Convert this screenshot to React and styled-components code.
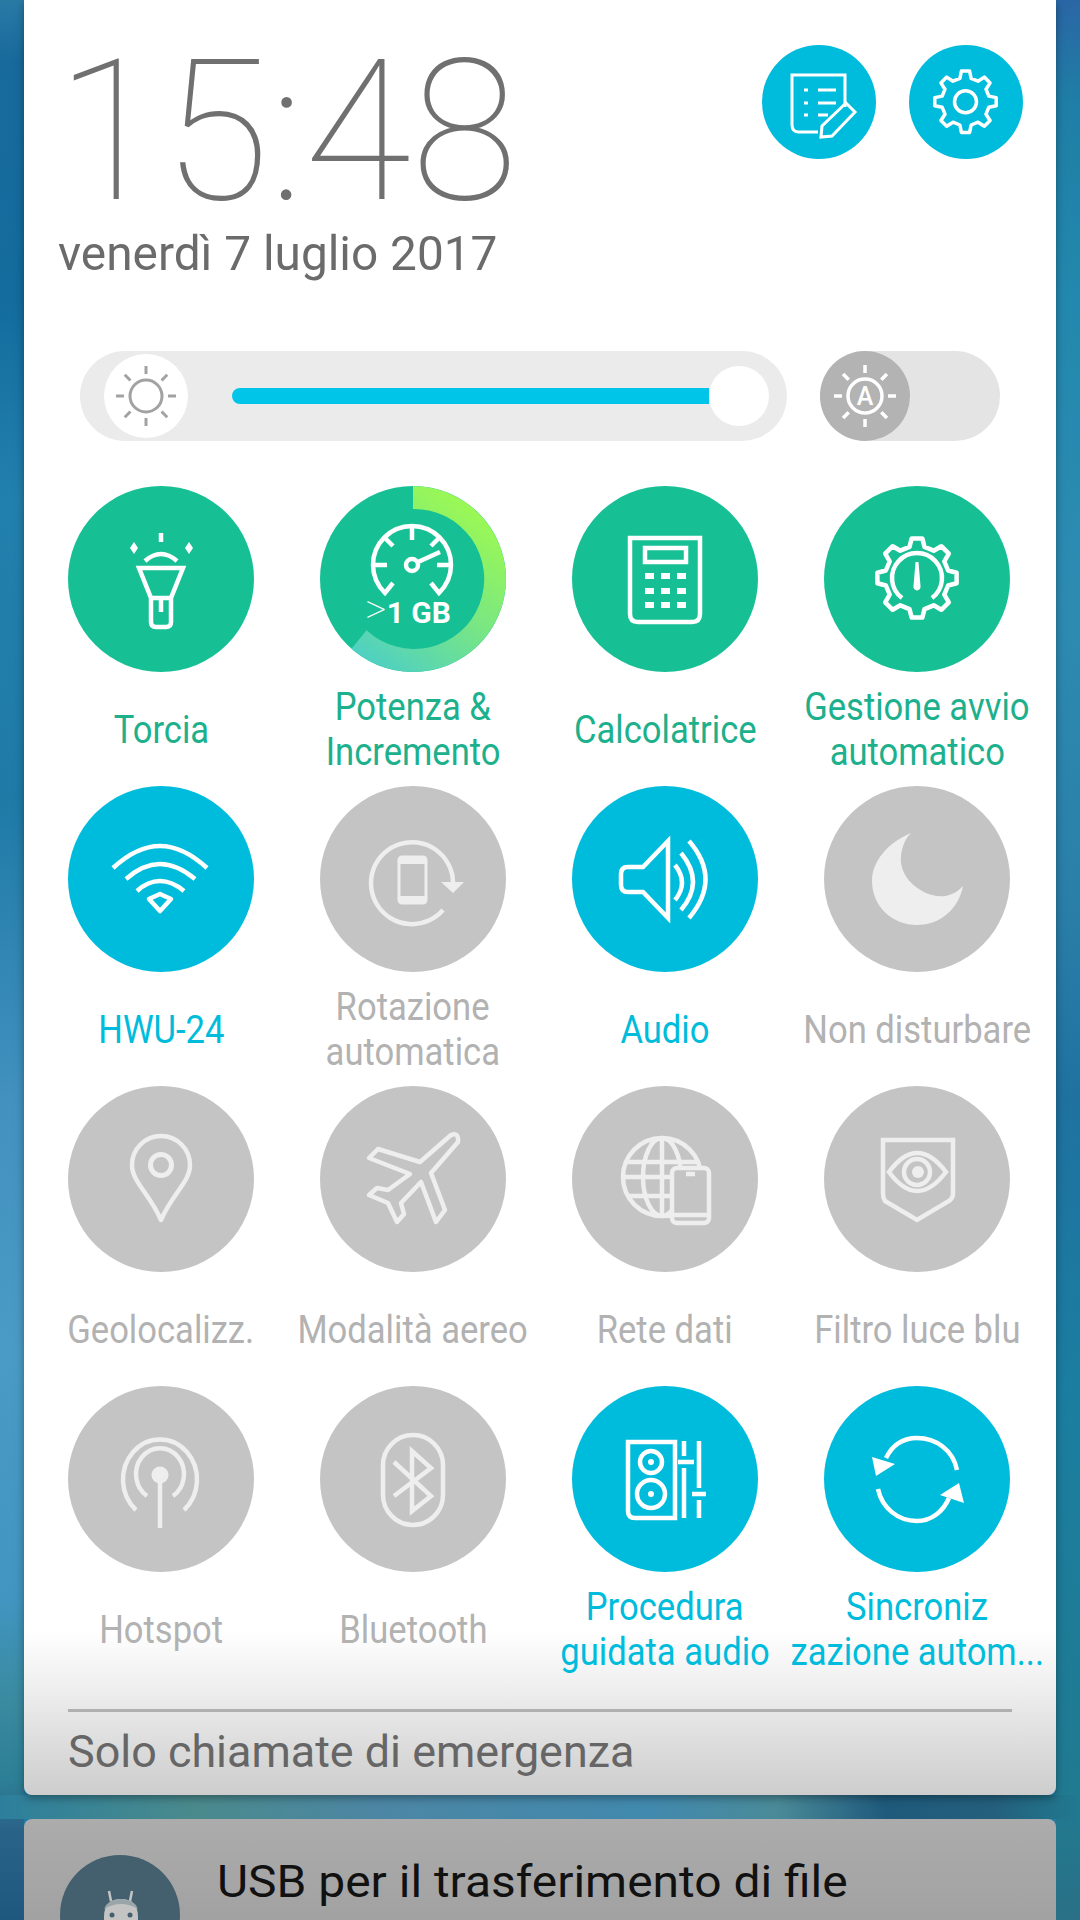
import React from 'react';
import styled, { createGlobalStyle } from 'styled-components';

const GlobalStyle = createGlobalStyle`
  html, body {
    margin: 0;
    padding: 0;
    background: #1f7aa6;
  }
  body {
    font-family: Roboto, "Liberation Sans", sans-serif;
  }
`;

const TONES = {
  green: { bg: '#16c094', text: '#1cb08d', icon: '#ffffff' },
  blue: { bg: '#00bcdc', text: '#00bcdc', icon: '#ffffff' },
  off: { bg: '#c4c4c4', text: '#b2b2b2', icon: '#eeeeee' },
};

const Page = styled.div`
  width: 1080px;
  height: 1920px;
  overflow: hidden;
  box-sizing: border-box;
  padding: 0 24px;
  display: flex;
  flex-direction: column;
  gap: 24px;
  background:
    linear-gradient(to right, #2c7f9c 0, #4a8a8c 18%, #4c86a4 35%, #4189ae 60%, #4a8a98 72%, #1f5a7c 82%, #245f7c 92%, #207a90 100%) 0 1795px / 100% 24px no-repeat,
    linear-gradient(#2a66a5 0, #1f7ea5 100px, #2388ad 300px, #2d8bb2 600px, #2a7fa8 900px, #1f72a0 1100px, #1b7ea0 1400px, #207a90 1800px, #2a7086 1920px) right / 24px 100% no-repeat,
    linear-gradient(#2a7aa6 0, #186a9c 60px, #136c9d 300px, #2280ae 500px, #1f7aa6 800px, #4291bf 1100px, #4a9bc6 1350px, #4195c0 1600px, #3a8aa0 1700px, #2d7f96 1780px, #2a6388 1830px, #1f587f 1920px) left / 24px 100% no-repeat;
`;

const Panel = styled.section`
  flex: none;
  height: 1795px;
  display: flex;
  flex-direction: column;
  border-radius: 0 0 8px 8px;
  box-shadow: 0 3px 8px rgba(0, 0, 0, 0.35);
  background: linear-gradient(#fff 0, #fff 1630px, #f1f1f1 1680px, #dedede 1740px, #cdcdcd 1795px);
`;

const Header = styled.header`
  height: 351px;
  flex: none;
  display: flex;
  justify-content: space-between;
  box-sizing: border-box;
`;

const Clock = styled.div`
  padding-left: 34px;
`;

const Time = styled.div`
  font-size: 197px;
  font-weight: 100;
  line-height: 180px;
  margin-top: 42px;
  margin-left: -2px;
  color: #707070;
  white-space: nowrap;
  transform: scaleX(0.99);
  transform-origin: left center;
`;

const DateText = styled.div`
  font-size: 49px;
  line-height: 60px;
  margin-top: 2px;
  color: #6b6b6b;
  white-space: nowrap;
  transform: scaleX(0.975);
  transform-origin: left center;
`;

const Shortcuts = styled.div`
  display: flex;
  gap: 33px;
  padding: 45px 33px 0 0;
`;

const RoundButton = styled.div`
  width: 114px;
  height: 114px;
  border-radius: 50%;
  background: #00bcdc;
  color: #fff;
`;

const SliderRow = styled.div`
  flex: none;
  display: flex;
  gap: 33px;
  margin-left: 56px;
`;

const Track = styled.div`
  width: 707px;
  height: 90px;
  box-sizing: border-box;
  border-radius: 45px;
  background: #ebebeb;
  display: flex;
  align-items: center;
  padding: 0 18px 0 24px;
`;

const SunBadge = styled.div`
  width: 84px;
  height: 84px;
  flex: none;
  border-radius: 50%;
  background: #fff;
  color: #a2a2a2;
`;

const Fill = styled.div`
  flex: 1;
  height: 16px;
  margin-left: 44px;
  border-radius: 8px 0 0 8px;
  background: #00c4e8;
`;

const Thumb = styled.div`
  width: 60px;
  height: 60px;
  flex: none;
  border-radius: 50%;
  background: #fff;
`;

const AutoToggle = styled.div`
  width: 180px;
  height: 90px;
  border-radius: 45px;
  background: #e4e4e4;
`;

const AutoKnob = styled.div`
  width: 90px;
  height: 90px;
  border-radius: 50%;
  background: #b3b3b3;
  color: #fff;
`;

const Grid = styled.div`
  flex: none;
  display: grid;
  grid-template-columns: repeat(4, 252px);
  grid-auto-rows: 300px;
  margin-top: 45px;
  padding-left: 11px;
`;

const Tile = styled.div`
  display: flex;
  flex-direction: column;
  align-items: center;
`;

const Disc = styled.div`
  width: 186px;
  height: 186px;
  flex: none;
  border-radius: 50%;
  background: ${(p) => TONES[p.$tone].bg};
  color: ${(p) => TONES[p.$tone].icon};
`;

const Label = styled.div`
  height: 90px;
  margin-top: 13px;
  display: flex;
  flex-direction: column;
  align-items: center;
  justify-content: center;
  font-size: 38px;
  line-height: 45px;
  color: ${(p) => TONES[p.$tone].text};
`;

const LabelLine = styled.span`
  display: block;
  white-space: nowrap;
  transform: scaleX(0.91);
`;

const Footer = styled.div`
  flex: none;
  margin: 23px 44px 0;
  border-top: 3px solid #b0b0b0;
`;

const Carrier = styled.div`
  font-size: 44px;
  line-height: 50px;
  margin-top: 15px;
  color: #666;
  white-space: nowrap;
  transform: scaleX(1.02);
  transform-origin: left center;
`;

const NoticeCard = styled.section`
  flex: none;
  height: 120px;
  border-radius: 8px 8px 0 0;
  background: linear-gradient(#acacac, #9c9c9c);
  display: flex;
  gap: 37px;
  padding: 36px 0 0 36px;
`;

const Avatar = styled.div`
  width: 120px;
  height: 120px;
  flex: none;
  border-radius: 50%;
  background: #44606e;
`;

const NoticeTitle = styled.div`
  font-size: 45px;
  line-height: 50px;
  margin-top: 2px;
  color: #111;
  white-space: nowrap;
  transform: scaleX(1.065);
  transform-origin: left center;
`;

const Icon = styled.svg`
  display: block;
  width: 100%;
  height: 100%;
  fill: none;
  stroke: currentColor;
  stroke-width: ${(p) => p.$weight || 4.5};
`;

const Solid = styled.g`
  fill: currentColor;
  stroke: none;
`;

const IconText = styled.text`
  font-family: Roboto, "Liberation Sans", sans-serif;
  fill: currentColor;
  stroke: none;
`;

// gear outline used by the settings button and the autostart tile
const gearPath = (cx, cy, rOut, rIn, teeth) => {
  const step = (Math.PI * 2) / teeth;
  const pts = [];
  for (let i = 0; i < teeth; i++) {
    const a = i * step - Math.PI / 2;
    const at = (r, d) => [cx + r * Math.cos(a + d * step), cy + r * Math.sin(a + d * step)];
    pts.push(at(rIn, -0.3), at(rOut, -0.17), at(rOut, 0.17), at(rIn, 0.3));
  }
  return 'M' + pts.map((p) => p[0].toFixed(1) + ' ' + p[1].toFixed(1)).join('L') + 'Z';
};

const rays = (cx, cy, r1, r2) =>
  [0, 1, 2, 3, 4, 5, 6, 7].map((i) => {
    const a = (i * Math.PI) / 4;
    return (
      <line
        key={i}
        x1={cx + r1 * Math.cos(a)}
        y1={cy + r1 * Math.sin(a)}
        x2={cx + r2 * Math.cos(a)}
        y2={cy + r2 * Math.sin(a)}
      />
    );
  });

const NotesIcon = () => (
  <Icon viewBox="0 0 114 114" $weight={3}>
    <path d="M83 62V30H30V80q0 7 7 7H56" />
    <path d="M42 45h4M56 45h18M42 58h4M56 58h18M42 70h4M56 70h10" />
    <path d="M59 92l1-11 24-23 9 9-23 24z" />
  </Icon>
);

const SettingsIcon = () => (
  <Icon viewBox="0 0 114 114" $weight={3.5}>
    <path d={gearPath(56.5, 56.7, 31, 24, 8)} strokeLinejoin="round" />
    <circle cx="56.5" cy="56.7" r="11" />
  </Icon>
);

const SunIcon = () => (
  <Icon viewBox="0 0 84 84" $weight={3}>
    <circle cx="42" cy="42" r="16" />
    {rays(42, 42, 22, 30)}
  </Icon>
);

const AutoSunIcon = () => (
  <Icon viewBox="0 0 90 90" $weight={3.5}>
    <circle cx="45" cy="45" r="17" />
    {rays(45, 45, 23, 31)}
    <IconText x="45" y="54" fontSize="25" fontWeight="500" textAnchor="middle">A</IconText>
  </Icon>
);

const TorchIcon = () => (
  <Icon viewBox="0 0 186 186">
    <path d="M93 47v9" />
    <Solid><path d="M66 56l4 6-4 6-4-6zM121 56l4 6-4 6-4-6z" /></Solid>
    <path d="M77 75q16-14 32 0" />
    <path d="M71 82h44l-12 30v24q0 5-5 5h-10q-5 0-5-5V112z" />
    <path d="M84 112h19M93 114v12" />
  </Icon>
);

const BoostIcon = () => (
  <Icon viewBox="0 0 186 186">
    <defs>
      <linearGradient id="boost" x1="0.8" y1="0" x2="0.2" y2="1">
        <stop offset="0" stopColor="#a2fc4a" />
        <stop offset="0.55" stopColor="#78e684" />
        <stop offset="1" stopColor="#4fd0c2" />
      </linearGradient>
    </defs>
    <path d="M93 0A93 93 0 1 1 31.5 162.8L46.5 144.2A70 70 0 1 0 93 23Z" fill="url(#boost)" stroke="none" />
    <path d="M73 97l-8 10q-12-12-12-28a39 39 0 0 1 78 0q0 16-12 28l-8-10" />
    <path d="M92 40v14M53 79h14M117 79h14M64 51l9 9M120 51l-9 9" />
    <circle cx="92" cy="79" r="6" />
    <path d="M98 76l22-10" />
    <IconText x="88" y="137" fontSize="30" fontWeight="700" textAnchor="middle">
      <tspan fontWeight="100" fontSize="42">&gt;</tspan>1 GB
    </IconText>
  </Icon>
);

const CalculatorIcon = () => (
  <Icon viewBox="0 0 186 186">
    <path d="M58 52h70v76q0 8-8 8H66q-8 0-8-8z" />
    <rect x="73" y="62" width="41" height="14" />
    <Solid>
      {[90, 105, 119].map((y) =>
        [73, 89, 105].map((x) => <rect key={x + '-' + y} x={x} y={y - 3} width="9" height="6" />)
      )}
    </Solid>
  </Icon>
);

const AutostartIcon = () => (
  <Icon viewBox="0 0 186 186">
    <path d={gearPath(93, 92, 40, 32, 8)} strokeLinejoin="round" />
    <path d="M78 112a25 25 0 1 1 30 0" />
    <Solid><path d="M91.5 76h3l2 24a3.6 3.6 0 1 1-7 0z" /></Solid>
  </Icon>
);

const WifiIcon = () => (
  <Icon viewBox="0 0 186 186">
    <path d="M45 82q24-22 47-22t47 22" />
    <path d="M58 93q17-15 34-15t35 15" />
    <path d="M69 105q11-10 23-10t24 10" />
    <path d="M92 108l11 5-11 12-11-12z" strokeLinejoin="round" />
  </Icon>
);

const RotateIcon = () => (
  <Icon viewBox="0 0 186 186">
    <path d="M133 96A41 41 0 1 0 123 124" />
    <Solid><path d="M121 96h23l-11 11z" /></Solid>
    <rect x="79" y="71" width="27" height="46" rx="3" strokeWidth="3" />
    <Solid><path d="M79 71h27v7H79zM79 110h27v7H79z" /></Solid>
  </Icon>
);

const SpeakerIcon = () => (
  <Icon viewBox="0 0 186 186">
    <path d="M96 55L71 81H56q-7 0-7 7v11q0 7 7 7H71L96 132z" />
    <path d="M103 79q14 18 0 35M109 67q24 29 0 57M117 55q33 38 0 77" />
  </Icon>
);

const MoonIcon = () => (
  <Icon viewBox="0 0 186 186">
    <Solid>
      <path d="M87 47C63 57 48 76 48 95C48 120 68 139 93 139C117 139 135 122 139 100C130 110 118 112 108 109C90 104 75 88 77 70C78 61 81 53 87 47Z" />
    </Solid>
  </Icon>
);

const PinIcon = () => (
  <Icon viewBox="0 0 186 186">
    <path d="M93 134C82 108 64 96 64 79a29 29 0 0 1 58 0C122 96 104 108 93 134z" strokeLinejoin="round" />
    <circle cx="93" cy="79" r="10.5" strokeWidth="5" />
  </Icon>
);

const PlaneIcon = () => (
  <Icon viewBox="0 0 186 186" strokeLinejoin="round">
    <path d="M131 49L100 76 58 63 49 72 90 88 68 104 57 102 49 109 68 117 77 136 84 128 81 117 101 96 116 136 125 124 111 87 138 56Q139 46 131 49Z" />
  </Icon>
);

const NetworkIcon = ({ tone }) => (
  <Icon viewBox="0 0 186 186">
    <circle cx="90" cy="91" r="39" />
    <ellipse cx="90" cy="91" rx="19" ry="39" />
    <path d="M90 52v78M53 76h74M51 91h78M55 110h70" />
    <rect x="100" y="82" width="37" height="55" rx="5" fill={TONES[tone].bg} />
    <path d="M114 88h9M100 129h37" />
  </Icon>
);

const ShieldIcon = () => (
  <Icon viewBox="0 0 186 186">
    <path d="M59 54h70v54q0 4-4 7l-32 19-32-19q-2-3-2-7z" />
    <path d="M65 86q28-38 57 0-29 38-57 0z" />
    <circle cx="93" cy="86" r="13" />
    <Solid><circle cx="94" cy="86" r="6" /></Solid>
  </Icon>
);

const HotspotIcon = () => (
  <Icon viewBox="0 0 186 186">
    <path d="M79 110A24 26 0 1 1 105 110" />
    <path d="M68 124A37 40 0 1 1 116 124" />
    <Solid><circle cx="92" cy="89" r="8.5" /></Solid>
    <path d="M92 95v47" />
  </Icon>
);

const BluetoothIcon = () => (
  <Icon viewBox="0 0 186 186">
    <rect x="63" y="49" width="60" height="90" rx="30" />
    <path d="M74 76L111 110 92 125V65L111 82 74 110" />
  </Icon>
);

const AudioWizardIcon = () => (
  <Icon viewBox="0 0 186 186">
    <path d="M56 56h47v76H63q-7 0-7-7z" />
    <circle cx="79" cy="76" r="11" />
    <circle cx="79" cy="108" r="14" />
    <Solid><circle cx="79" cy="76" r="3" /><circle cx="79" cy="108" r="3" /></Solid>
    <path d="M112 55v15M112 82v50M127 55v47M127 114v18" />
    <path d="M106 76h16M120 108h14" />
  </Icon>
);

const SyncIcon = () => (
  <Icon viewBox="0 0 186 186">
    <path d="M133 84C129 64 112 52 93 52C80 52 69 58 62 72" />
    <Solid><path d="M48 71l23 7-19 12z" /></Solid>
    <path d="M54 103C58 122 74 135 93 135C107 135 119 126 125 112" />
    <Solid><path d="M135 97l5 20-24-8z" /></Solid>
  </Icon>
);

const AndroidIcon = () => (
  <svg viewBox="0 0 120 120" width="120" height="120">
    <path d="M49 36l2 10M72 36l-2 10" stroke="#c4c4c4" strokeWidth="2.5" />
    <path d="M44 62q0-18 17-18t17 18v40H44z" fill="#c4c4c4" />
    <path d="M44 54q17-10 34 0q-4-10-17-10t-17 10z" fill="#9aa5aa" />
    <circle cx="52" cy="60" r="2.5" fill="#44606e" />
    <circle cx="70" cy="60" r="2.5" fill="#44606e" />
  </svg>
);

const TILES = [
  { tone: 'green', lines: ['Torcia'], icon: TorchIcon },
  { tone: 'green', lines: ['Potenza &', 'Incremento'], icon: BoostIcon },
  { tone: 'green', lines: ['Calcolatrice'], icon: CalculatorIcon },
  { tone: 'green', lines: ['Gestione avvio', 'automatico'], icon: AutostartIcon },
  { tone: 'blue', lines: ['HWU-24'], icon: WifiIcon },
  { tone: 'off', lines: ['Rotazione', 'automatica'], icon: RotateIcon },
  { tone: 'blue', lines: ['Audio'], icon: SpeakerIcon },
  { tone: 'off', lines: ['Non disturbare'], icon: MoonIcon },
  { tone: 'off', lines: ['Geolocalizz.'], icon: PinIcon },
  { tone: 'off', lines: ['Modalità aereo'], icon: PlaneIcon },
  { tone: 'off', lines: ['Rete dati'], icon: NetworkIcon },
  { tone: 'off', lines: ['Filtro luce blu'], icon: ShieldIcon },
  { tone: 'off', lines: ['Hotspot'], icon: HotspotIcon },
  { tone: 'off', lines: ['Bluetooth'], icon: BluetoothIcon },
  { tone: 'blue', lines: ['Procedura', 'guidata audio'], icon: AudioWizardIcon },
  { tone: 'blue', lines: ['Sincroniz', 'zazione autom...'], icon: SyncIcon },
];

const App = () => {
  return (
    <Page>
      <GlobalStyle />
      <Panel>
        <Header>
          <Clock>
            <Time>15:48</Time>
            <DateText>venerdì 7 luglio 2017</DateText>
          </Clock>
          <Shortcuts>
            <RoundButton><NotesIcon /></RoundButton>
            <RoundButton><SettingsIcon /></RoundButton>
          </Shortcuts>
        </Header>
        <SliderRow>
          <Track>
            <SunBadge><SunIcon /></SunBadge>
            <Fill />
            <Thumb />
          </Track>
          <AutoToggle>
            <AutoKnob><AutoSunIcon /></AutoKnob>
          </AutoToggle>
        </SliderRow>
        <Grid>
          {TILES.map(({ tone, lines, icon: TileIcon }) => (
            <Tile key={lines[0]}>
              <Disc $tone={tone}><TileIcon tone={tone} /></Disc>
              <Label $tone={tone}>
                {lines.map((line) => <LabelLine key={line}>{line}</LabelLine>)}
              </Label>
            </Tile>
          ))}
        </Grid>
        <Footer>
          <Carrier>Solo chiamate di emergenza</Carrier>
        </Footer>
      </Panel>
      <NoticeCard>
        <Avatar><AndroidIcon /></Avatar>
        <NoticeTitle>USB per il trasferimento di file</NoticeTitle>
      </NoticeCard>
    </Page>
  );
};

export default App;
